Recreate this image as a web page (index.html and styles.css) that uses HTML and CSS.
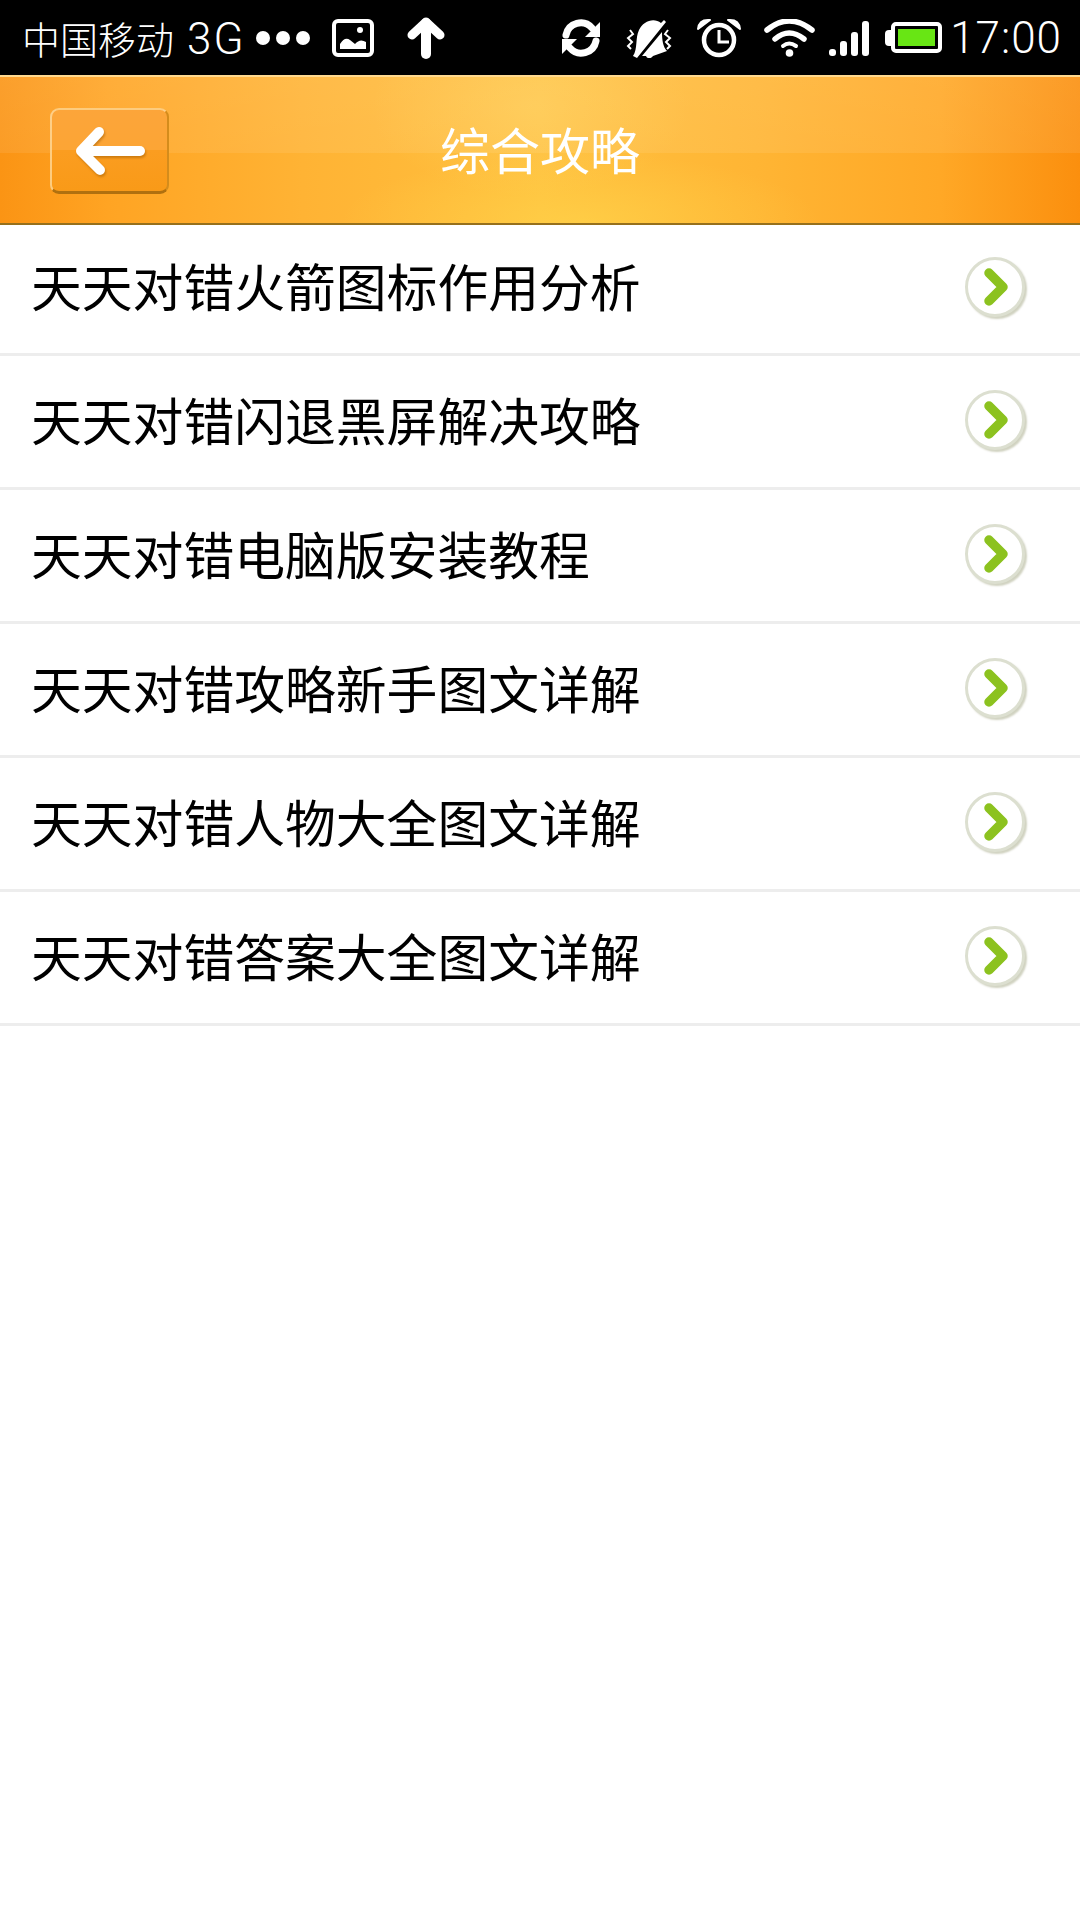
FILE: index.html
```html
<!DOCTYPE html>
<html lang="zh-CN">
<head>
    <meta charset="UTF-8">
    <meta name="viewport" content="width=device-width, initial-scale=1.0">
    <title>综合攻略</title>
    <link rel="stylesheet" href="styles.css">
</head>
<body>
    <div class="statusbar">
        <div class="status-left">
            <span class="carrier">中国移动<span class="net">3G</span></span>
            <span class="dots"><i></i><i></i><i></i></span>
            <svg class="ic-photo" width="42" height="38" viewBox="0 0 42 38">
                <rect x="2" y="2" width="38" height="34" rx="4" fill="none" stroke="#fff" stroke-width="4"/>
                <path d="M8 30 L8 25 Q13 17 18 21 L23 25 Q28 19 34 23 L34 30 Z" fill="#fff"/>
                <circle cx="28" cy="11" r="3" fill="#fff"/>
            </svg>
            <svg class="ic-up" width="38" height="42" viewBox="0 0 38 42">
                <path d="M19 5 L33 18 M19 5 L5 18" stroke="#fff" stroke-width="9" stroke-linecap="round" fill="none"/>
                <path d="M19 6 L19 37" stroke="#fff" stroke-width="10" stroke-linecap="round"/>
            </svg>
        </div>
        <div class="status-right">
            <svg width="40" height="40" viewBox="0 0 40 40">
                <path d="M5 17 A15 15 0 0 1 31 10" fill="none" stroke="#fff" stroke-width="7" stroke-linecap="round"/>
                <path d="M39 4 L39 19 L24 19 Z" fill="#fff"/>
                <path d="M35 23 A15 15 0 0 1 9 30" fill="none" stroke="#fff" stroke-width="7" stroke-linecap="round"/>
                <path d="M1 36 L1 21 L16 21 Z" fill="#fff"/>
            </svg>
            <svg width="46" height="40" viewBox="0 0 46 40">
                <path d="M7 38 C12 31 9 20 13 12 C17 3 28 -1 35 5 L38 2 L40 4 L11 40 Z" fill="#fff"/>
                <path d="M16 38 L36 14 C36 22 37 29 41 33 L27 38 C25 41 21 41 20 38 Z" fill="#fff"/>
                <path d="M4 12 L7 16 L2 20 L6 24 L2 28 L5 31 M42 12 L39 16 L44 20 L40 24 L44 28 L41 31" fill="none" stroke="#fff" stroke-width="2"/>
            </svg>
            <svg width="46" height="40" viewBox="0 0 46 40">
                <circle cx="23" cy="22" r="15" fill="none" stroke="#fff" stroke-width="4.500"/>
                <path d="M23 12 L23 24 L33 24" fill="none" stroke="#fff" stroke-width="3"/>
                <path d="M2 11 Q3 1 14 2 Z M44 11 Q43 1 32 2 Z" fill="#fff" stroke="#fff" stroke-width="2" stroke-linejoin="round"/>
            </svg>
            <svg width="51" height="38" viewBox="0 0 51 38">
                <path d="M3 11 Q25 -7 48 11" fill="none" stroke="#fff" stroke-width="5.500" stroke-linecap="round"/>
                <path d="M11 20 Q25 8 40 20" fill="none" stroke="#fff" stroke-width="5.500" stroke-linecap="round"/>
                <path d="M19 27 Q25 22 32 27" fill="none" stroke="#fff" stroke-width="4" stroke-linecap="round"/>
                <circle cx="25.500" cy="34" r="3.800" fill="#fff"/>
            </svg>
            <div class="signal"><i class="s1"></i><i class="s2"></i><i class="s3"></i><i class="s4"></i></div>
            <div class="battery"><span class="battery-cap"></span><span class="battery-body"><span class="battery-fill"></span></span></div>
            <span class="clock">17:00</span>
        </div>
    </div>

    <div class="header">
        <div class="back-btn">
            <svg class="back-arrow" width="72" height="50" viewBox="0 0 72 50">
                <path d="M25 6 L7 25 L26 44" fill="none" stroke="#fff" stroke-width="10" stroke-linecap="round" stroke-linejoin="round"/>
                <path d="M9 25 L66 25" stroke="#fff" stroke-width="10" stroke-linecap="round"/>
            </svg>
        </div>
        <h1 class="title">综合攻略</h1>
    </div>

    <ul class="list">
        <li class="row"><span class="label">天天对错火箭图标作用分析</span><span class="go"><svg width="26" height="38" viewBox="0 0 26 38"><path d="M5 5 L19 19 L5 33" fill="none" stroke="#8cc21f" stroke-width="9.500" stroke-linecap="round" stroke-linejoin="round"/></svg></span></li>
        <li class="row"><span class="label">天天对错闪退黑屏解决攻略</span><span class="go"><svg width="26" height="38" viewBox="0 0 26 38"><path d="M5 5 L19 19 L5 33" fill="none" stroke="#8cc21f" stroke-width="9.500" stroke-linecap="round" stroke-linejoin="round"/></svg></span></li>
        <li class="row"><span class="label">天天对错电脑版安装教程</span><span class="go"><svg width="26" height="38" viewBox="0 0 26 38"><path d="M5 5 L19 19 L5 33" fill="none" stroke="#8cc21f" stroke-width="9.500" stroke-linecap="round" stroke-linejoin="round"/></svg></span></li>
        <li class="row"><span class="label">天天对错攻略新手图文详解</span><span class="go"><svg width="26" height="38" viewBox="0 0 26 38"><path d="M5 5 L19 19 L5 33" fill="none" stroke="#8cc21f" stroke-width="9.500" stroke-linecap="round" stroke-linejoin="round"/></svg></span></li>
        <li class="row"><span class="label">天天对错人物大全图文详解</span><span class="go"><svg width="26" height="38" viewBox="0 0 26 38"><path d="M5 5 L19 19 L5 33" fill="none" stroke="#8cc21f" stroke-width="9.500" stroke-linecap="round" stroke-linejoin="round"/></svg></span></li>
        <li class="row"><span class="label">天天对错答案大全图文详解</span><span class="go"><svg width="26" height="38" viewBox="0 0 26 38"><path d="M5 5 L19 19 L5 33" fill="none" stroke="#8cc21f" stroke-width="9.500" stroke-linecap="round" stroke-linejoin="round"/></svg></span></li>
    </ul>
</body>
</html>
```

FILE: styles.css
```css
* { box-sizing: border-box; }

html, body {
    margin: 0;
    padding: 0;
    background: #fff;
}
body {
    width: 1080px;
    height: 1920px;
    overflow: hidden;
    font-family: "Noto Sans CJK SC", "Noto Sans", sans-serif;
}

/* status bar */
.statusbar {
    height: 75px;
    background: #000;
    color: #fff;
    display: flex;
    align-items: center;
    justify-content: space-between;
    padding: 0 18px 0 22px;
}
.status-left, .status-right {
    display: flex;
    align-items: center;
}
.carrier {
    font-family: Roboto, "Noto Sans CJK SC", sans-serif;
    font-size: 38px;
    font-weight: 300;
    white-space: nowrap;
    width: 234px;
}
.net {
    font-size: 44px;
    margin-left: 13px;
    letter-spacing: 2px;
}
.dots {
    display: flex;
    gap: 6px;
    width: 76px;
}
.dots i {
    width: 14px;
    height: 14px;
    border-radius: 50%;
    background: #fff;
}
.ic-up { margin-left: 33px; }
.status-right svg { margin-right: 25px; }
.status-right svg:nth-child(2) { margin-right: 24px; }
.status-right svg:nth-child(3) { margin-right: 22px; }
.status-right svg:nth-child(4) { margin-right: 14px; }
.signal {
    display: flex;
    align-items: flex-end;
    gap: 4px;
    height: 36px;
    margin-right: 16px;
}
.signal i {
    width: 7px;
    background: #fff;
    border-radius: 3px;
}
.signal .s1 { height: 7px; }
.signal .s2 { height: 15px; }
.signal .s3 { height: 24px; }
.signal .s4 { height: 35px; }
.battery {
    display: flex;
    align-items: center;
    margin-right: 8px;
}
.battery-cap {
    width: 6px;
    height: 16px;
    background: #fff;
    border-radius: 4px 0 0 4px;
}
.battery-body {
    width: 51px;
    height: 31px;
    border: 4px solid #fff;
    border-radius: 5px;
    padding: 3px;
}
.battery-fill {
    display: block;
    height: 100%;
    background: #68e614;
}
.clock {
    font-family: Roboto, sans-serif;
    font-size: 44px;
    font-weight: 300;
    letter-spacing: 1px;
}

/* header */
.header {
    height: 150px;
    position: relative;
    display: flex;
    align-items: center;
    justify-content: center;
    padding-bottom: 4px;
    border-top: 2px solid #ffd98f;
    border-bottom: 2px solid #96701c;
    background:
        linear-gradient(180deg, rgba(255,255,255,0.1) 0, rgba(255,255,255,0.08) 76px, rgba(255,255,255,0) 76px),
        radial-gradient(ellipse 240px 70px at 580px 146px, rgba(255,222,80,0.45), rgba(255,222,80,0)),
        radial-gradient(ellipse 160px 90px at 530px 30px, rgba(255,225,120,0.25), rgba(255,225,120,0)),
        linear-gradient(90deg, #fb9414 0, #ffa423 10%, #ffb334 28%, #ffc03e 50%, #ffb534 70%, #ffa826 87%, #fb8f0e 100%);
}
.back-btn {
    position: absolute;
    left: 50px;
    top: 31px;
    width: 119px;
    height: 86px;
    display: flex;
    align-items: center;
    justify-content: center;
    border: 2px solid rgba(255,226,170,0.7);
    border-bottom: 3px solid #b0700f;
    border-right-color: #d48c1c;
    border-radius: 9px;
    background: linear-gradient(180deg, #fca53a 0, #fca535 50%, #fb9d20 50%, #f99a18 100%);
}
.back-arrow { filter: drop-shadow(1px 2px 1px rgba(160,90,0,0.5)); }
.title {
    margin: 0;
    color: #fff;
    font-size: 50px;
    font-weight: 400;
    line-height: 1;
}

/* list */
.list {
    list-style: none;
    margin: 0;
    padding: 0;
}
.row {
    height: 134px;
    display: flex;
    align-items: center;
    justify-content: space-between;
    padding: 0 55px 4px 31px;
    border-bottom: 3px solid #ededed;
    color: #000;
    font-size: 50.800px;
    line-height: 1;
}
.row:first-child { height: 131px; }
.row:first-child .label { margin-bottom: 4px; }
.go {
    width: 60px;
    height: 60px;
    border-radius: 50%;
    display: flex;
    align-items: center;
    justify-content: center;
    padding-left: 4px;
    background: #fff;
    border: 3px solid #dcdfd0;
    box-shadow: 2px 2px 2px #d0d2c0;
}
```
